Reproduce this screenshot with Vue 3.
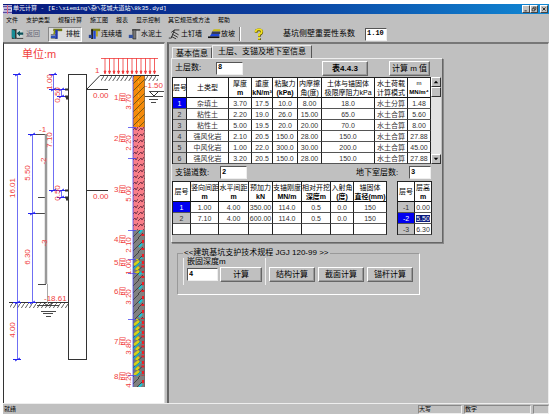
<script setup>
import { ref } from 'vue'

const menus = ['文件', '支护类型', '规程计算', '施工图', '报表', '显示控制', '其它规范或方法', '帮助']
const factor = ref('1.10')
const layerCount = ref('8')
const anchorCount = ref('2')
const basementCount = ref('3')
const depth = ref('4')

const soilHead = [
  ['层号'], ['土类型'], ['厚度', 'm'], ['重度', 'kN/m³'], ['粘聚力', '(kPa)'],
  ['内摩擦', '角(度)'], ['土体与锚固体', '极限摩阻力kPa'], ['水土荷载', '计算模式'], ['m', 'MN/m⁴']
]
const soilCols = ['w14', 'w42', 'w23', 'w21', 'w25', 'w24', 'w53', 'w33', 'w23']
const soils = [
  ['1', '杂填土', '3.70', '17.5', '10.0', '8.00', '18.0', '水土分算', '1.48'],
  ['2', '粘性土', '2.20', '19.0', '26.0', '15.00', '65.0', '水土合算', '5.60'],
  ['3', '粘性土', '5.00', '19.5', '20.0', '20.00', '70.0', '水土合算', '8.00'],
  ['4', '强风化岩', '2.10', '20.5', '150.0', '28.00', '150.0', '水土合算', '27.88'],
  ['5', '中风化岩', '1.00', '22.0', '300.0', '30.00', '200.0', '水土合算', '45.00'],
  ['6', '强风化岩', '3.20', '20.5', '150.0', '28.00', '150.0', '水土合算', '27.88']
]
const anchorHead = [
  ['层号'], ['竖向间距', 'm'], ['水平间距', 'm'], ['预加力', 'kN'], ['支锚刚度', 'MN/m'],
  ['相对开挖', '深度m'], ['入射角', '(度)'], ['锚固体', '直径(mm)']
]
const anchorCols = ['w18', 'w28', 'w30', 'w24', 'w29', 'w29', 'w23', 'w33']
const anchors = [
  ['1', '1.00', '4.00', '350.00', '114.0', '0.5', '0.0', '150'],
  ['2', '7.10', '4.00', '600.00', '114.0', '0.5', '0.0', '150'],
  ['', '', '', '', '', '', '', '']
]
const floors = [['-1', '0.00'], ['-2', '5.50'], ['-3', '6.30']]

const loads = Array.from({ length: 12 }, (_, i) => 105 + i * 4.5)
const strata = [
  { n: '1层', v: '3.70', y: 97, vy: 102 },
  { n: '2层', v: '2.20', y: 138, vy: 143 },
  { n: '3层', v: '5.00', y: 189, vy: 194 },
  { n: '4层', v: '2.10', y: 239, vy: 245 },
  { n: '5层', v: '1.00', y: 262, vy: 267 },
  { n: '6层', v: '3.20', y: 291, vy: 297 },
  { n: '7层', v: '3.80', y: 341, vy: 347 },
  { n: '8层', v: '4.20', y: 376, vy: 380 }
]
const ticks = [127, 158, 230, 259, 273, 319, 375]
const vertical = [
  { t: '16.01', x: 15, y: 188 }, { t: '4.00', x: 15, y: 330 }, { t: '5.50', x: 30, y: 173 },
  { t: '6.30', x: 30, y: 257 }, { t: '1.00', x: 52, y: 82 }, { t: '0.50', x: 60, y: 95 },
  { t: '7.10', x: 52, y: 140 }, { t: '0.50', x: 60, y: 193 }, { t: '-2', x: 46, y: 161 },
  { t: '-3', x: 47, y: 243 }
]
const marks = [[17, 74], [17, 302], [17, 359], [53, 74], [53, 89], [53, 190], [32, 134], [32, 213], [32, 302], [61, 89], [61, 96], [61, 190], [61, 197]]
</script>

<template>
  <div class="app">
    <header class="title">
      <svg class="logo" viewBox="0 0 9 9" aria-hidden="true">
        <rect width="9" height="9" fill="#d8d8e8" /><path d="M0 1.5h4M5 1.5h4M1 4.5h3M5 4.5h3M0 7.5h4M5 7.5h4" stroke="#5a4ca0" stroke-width="1.4" /><path d="M4.5 0v9" stroke="#e06a80" />
      </svg>
      <h1>单元计算 - [E:\xieming\杂\花城大道站\8k35.dyd]</h1>
      <div class="winbtns">
        <button type="button" aria-label="最小化"><svg viewBox="0 0 8 8"><path d="M2 6.5h3" stroke="#000" /></svg></button>
        <button type="button" aria-label="还原"><svg viewBox="0 0 8 8"><path d="M3 3V1.5h3.500v3H5M1.500 3.500h3.500v3H1.500z" fill="none" stroke="#000" stroke-width=".8" /></svg></button>
        <button type="button" class="close" aria-label="关闭"><svg viewBox="0 0 8 8"><path d="M2 2l4 4M6 2L2 6" stroke="#000" /></svg></button>
      </div>
    </header>

    <nav class="menu">
      <a v-for="m in menus" :key="m" href="#">{{ m }}</a>
    </nav>

    <div class="toolbar">
      <button type="button" class="tool dim">
        <svg viewBox="0 0 16 14"><path d="M1 1h6v12H1z" fill="#333" /><path d="M1 1l4 2v10l-4-2z" fill="#178c96" /><path d="M7 2h7v9H7z" fill="#c8d8d8" /><path d="M7 6l4-3v2h4v3h-4v2z" fill="#0a5058" /><path d="M7 12.500h8" stroke="#333" /></svg>返回
      </button>
      <button type="button" class="tool pressed">
        <svg viewBox="0 0 16 14"><path d="M4 2h11" stroke="#6f7810" stroke-width="3" /><path d="M5 2h4L6 7H4z" fill="#8f980c" /><path d="M8 2v11" stroke="#2036b0" stroke-width="3" /><path d="M1 8h6M1 12h7" stroke="#333" /><path d="M1 9h6v3H1z" fill="#2c50b8" /></svg>排桩
      </button>
      <button type="button" class="tool">
        <svg viewBox="0 0 16 14"><path d="M4 2h11" stroke="#787c18" stroke-width="3" /><path d="M5 1v12" stroke="#111" stroke-width="2" /><path d="M8 3v10" stroke="#2348cc" stroke-width="3" /><path d="M1 8h4v4H1z" fill="#25408e" /><path d="M10 3h2v7h-2z" fill="#b6a514" /></svg>连续墙
      </button>
      <button type="button" class="tool">
        <svg viewBox="0 0 16 14"><path d="M5 2h10" stroke="#444" stroke-width="2" /><path d="M6 2h4v11H6z" fill="#777" stroke="#333" /><path d="M1 8h5v4H1z" fill="#3150a0" /><path d="M11 3v10" stroke="#eee" /></svg>水泥土
      </button>
      <button type="button" class="tool">
        <svg viewBox="0 0 16 14"><path d="M1 12h3L8 2h6M6 4l7 4M5 7l7 4M4 10l6 3M8 2l-4 3" fill="none" stroke="#333" stroke-width="1.200" /></svg>土钉墙
      </button>
      <button type="button" class="tool">
        <svg viewBox="0 0 16 14"><path d="M7 1h8v3H5z" fill="#c9bb13" /><path d="M5 4h10v3H4z" fill="#353b5a" /><path d="M4 7h10v3H2z" fill="#1e45d6" /><path d="M0 11h14" stroke="#111" stroke-width="2" /></svg>放坡
      </button>
      <span class="sep"></span>
      <button type="button" class="help" aria-label="帮助">
        <svg viewBox="0 0 12 14"><path d="M3 5V3.500Q3 2 6 2t3 2.500Q9 6 6.500 7.500v2M6.500 11v2" fill="none" stroke="#5c5200" stroke-width="3" /><path d="M2.500 4.500V3.500Q3 1.500 6 1.500t3 2.500Q9 5.500 6 7v2M6 10.500v2" fill="none" stroke="#f4e21c" stroke-width="2" /></svg>
      </button>
      <label class="factor"><span>基坑侧壁重要性系数</span><input v-model="factor" class="field w22" type="text" /></label>
    </div>

    <main class="work">
      <section class="canvas">
        <svg viewBox="4 44 160 358" role="img" aria-label="支护剖面图">
          <defs>
            <pattern id="fill" width="7" height="7" patternUnits="userSpaceOnUse"><rect width="7" height="7" fill="#f58a0a" /><path d="M-1 8L8 -1" stroke="#7b5a10" /><path d="M5 5h1" stroke="#ffe43a" /></pattern>
            <pattern id="clay" width="6" height="6" patternUnits="userSpaceOnUse"><rect width="6" height="6" fill="#f87e88" /><path d="M0 5L3 2l1 2 2-3" fill="none" stroke="#7c3448" /></pattern>
            <pattern id="rock" x="133" width="12" height="14" patternUnits="userSpaceOnUse"><rect width="12" height="14" fill="#808080" /><path d="M0 6L6 0M0 13L9 4M5 14l5-5" stroke="#444" /><path d="M6 9l3-3" stroke="#12c8d8" stroke-width="2" /><path d="M10 2v3M8.500 11h3" stroke="#f01c24" stroke-width="2" /></pattern>
            <pattern id="mid" x="133" width="12" height="10" patternUnits="userSpaceOnUse"><rect width="12" height="10" fill="#777" /><path d="M-1 9L7 2M4 11l6-5" stroke="#174f5c" /><path d="M1 5l5-4M3 10l3-3" stroke="#d8d014" stroke-width="2.500" /><path d="M0 9l8-7" stroke="#12b8c8" stroke-width="1.200" /><path d="M10 1v3M8.500 6.500h3" stroke="#f01c24" stroke-width="2" /></pattern>
            <pattern id="hatch" width="4" height="6" patternUnits="userSpaceOnUse" y="76"><path d="M0 6L4 0" stroke="#333" stroke-width=".8" /></pattern>
          </defs>

          <rect x="101" y="76" width="57" height="5" fill="url(#hatch)" />
          <rect x="10" y="303" width="58" height="5" fill="url(#hatch)" />
          <rect x="133" y="76" width="12" height="51" fill="url(#fill)" />
          <rect x="133" y="127" width="12" height="103" fill="url(#clay)" />
          <rect x="133" y="230" width="12" height="157" fill="url(#rock)" />
          <rect x="133" y="259" width="12" height="14" fill="url(#mid)" />
          <rect x="133" y="319" width="12" height="57" fill="url(#mid)" />
          <path d="M144.500 76V387" stroke="#666" stroke-width=".6" />

          <g fill="none" stroke="#333">
            <rect x="68.500" y="74.500" width="18" height="285" />
            <path d="M87 89.500h21M87 190.500h21M87 89L100 75.500h59M9 302.500h60" />
            <path d="M29 134.500h18M38 197.500h8M28 213.500h18M38 284.500h8M149 91.500h15M145 96.500h18M149 99.500h9M151 102.500h5M37 305.500h22M41 311.500h15M43 313.500h10M46 316.500h5" stroke-width=".9" />
            <path d="M150 92l4 4 4-4M44 303l4 3 4-3" />
            <path d="M65 89.500h4M65 96.500h4M66 98.500h3M65 190.500h4M65 197.500h4M66 199.500h3" stroke-width="2" />
          </g>
          <path d="M46 134V284" stroke="#999" stroke-width="2.500" /><path d="M47.500 284V303" stroke="#aaa" />

          <g stroke="#4a4af0" stroke-width=".8">
            <path d="M17.500 74V359M32.500 134V302M53.500 74V190M61.500 89v8M61.500 190v8M133 75V387" />
            <path v-for="t in ticks" :key="t" :d="`M128 ${t}.500h8`" />
          </g>
          <path v-for="(m, i) in marks" :key="i" :d="`M${m[0] - 4} ${m[1] + 0.5}h8M${m[0] - 2} ${m[1] + 2}l5 -3`" stroke="#2222ee" />

          <g stroke="#f03838" fill="#f03838">
            <path d="M101 58.500h57" stroke-width=".8" />
            <path v-for="x in loads" :key="x" :d="`M${x} 58V73M${x - 1} 71l1 3 1-3z`" stroke-width=".8" />
          </g>

          <g class="red">
            <text class="unit" x="22" y="58">单位:m</text>
            <text x="95" y="73">1</text>
            <text x="93" y="98">0.00</text><text x="93" y="199">0.00</text>
            <text x="163" y="88" text-anchor="end">-1.50</text><text x="39" y="132">-1</text>
            <text x="44" y="301">-18.61</text>
            <text v-for="(v, i) in vertical" :key="i" text-anchor="middle" :transform="`translate(${v.x} ${v.y}) rotate(-90)`">{{ v.t }}</text>
            <g v-for="s in strata" :key="s.n">
              <text x="114" :y="s.y + 3">{{ s.n }}</text>
              <text text-anchor="middle" :transform="`translate(131 ${s.vy}) rotate(-90)`">{{ s.v }}</text>
            </g>
          </g>
        </svg>
      </section>

      <section class="side">
        <div class="tabbox">
          <div class="tabs" role="tablist">
            <button type="button" role="tab" aria-selected="false" class="tab">基本信息</button>
            <button type="button" role="tab" aria-selected="true" class="tab on">土层、支锚及地下室信息</button>
          </div>
          <div class="page">
            <div class="row first">
              <label for="layers">土层数:</label>
              <input id="layers" v-model="layerCount" class="field w26" type="text" />
              <span class="grow"></span>
              <button type="button" class="btn w46">表4.4.3</button>
              <button type="button" class="btn w40">计算 m 值</button>
            </div>
            <div class="gridwrap">
              <table class="grid soil">
                <colgroup><col v-for="(c, i) in soilCols" :key="i" :class="c" /></colgroup>
                <thead><tr><th v-for="(h, i) in soilHead" :key="i"><div v-for="l in h" :key="l">{{ l }}</div></th></tr></thead>
                <tbody>
                  <tr v-for="(r, i) in soils" :key="i"><td v-for="(c, j) in r" :key="j" :class="{ no: j === 0, cur: j === 0 && i === 0 }">{{ c }}</td></tr>
                </tbody>
              </table>
              <div class="scroll">
                <button type="button" aria-label="上移"><svg viewBox="0 0 7 7"><path d="M1.500 4.500h4l-2-2z" /></svg></button>
                <span class="thumb"></span><span class="grow"></span>
                <button type="button" aria-label="下移"><svg viewBox="0 0 7 7"><path d="M1.500 2.500h4l-2 2z" /></svg></button>
              </div>
            </div>
            <div class="row second">
              <label for="anchors">支锚道数:</label>
              <input id="anchors" v-model="anchorCount" class="field w26" type="text" />
              <span class="grow"></span>
              <label for="floors">地下室层数:</label>
              <input id="floors" v-model="basementCount" class="field w22" type="text" />
            </div>
            <div class="gridwrap apart">
              <table class="grid anchor">
                <colgroup><col v-for="(c, i) in anchorCols" :key="i" :class="c" /></colgroup>
                <thead><tr><th v-for="(h, i) in anchorHead" :key="i"><div v-for="l in h" :key="l">{{ l }}</div></th></tr></thead>
                <tbody>
                  <tr v-for="(r, i) in anchors" :key="i"><td v-for="(c, j) in r" :key="j" :class="{ no: j === 0 && c, cur: j === 0 && i === 0 }">{{ c }}</td></tr>
                </tbody>
              </table>
              <table class="grid floor">
                <thead><tr><th>层号</th><th><div>层高</div><div>m</div></th></tr></thead>
                <tbody>
                  <tr v-for="(r, i) in floors" :key="i"><td class="no" :class="{ cur: i === 1 }">{{ r[0] }}</td><td><span :class="{ sel: i === 1 }">{{ r[1] }}</span></td></tr>
                </tbody>
              </table>
            </div>
          </div>
        </div>

        <fieldset class="code">
          <legend>&lt;&lt;建筑基坑支护技术规程 JGJ 120-99 &gt;&gt;</legend>
          <div class="codes">
            <div class="embed">
              <label for="depth">嵌固深度m</label>
              <div class="pair"><input id="depth" v-model="depth" class="field" type="text" /><button type="button" class="btn w42">计算</button></div>
            </div>
            <div class="acts">
              <button type="button" class="btn w46">结构计算</button>
              <button type="button" class="btn w46">截面计算</button>
              <button type="button" class="btn w46">锚杆计算</button>
            </div>
          </div>
        </fieldset>
      </section>
    </main>

    <footer class="status"><span class="grow">就绪</span><span class="cell caps">大写</span><span class="cell num">数字</span><span class="cell end"></span></footer>
  </div>
</template>

<style>
body { background: #fff; }
</style>

<style scoped>
* { box-sizing: border-box; }
.app { min-height: 100vh; padding: 4px 5px 4px 3px; display: flex; flex-direction: column; color: #000; font: 8px/10px "Liberation Sans", "Noto Sans CJK SC", sans-serif; }
button, input { font: inherit; color: inherit; margin: 0; padding: 0; border-radius: 0; }
button { white-space: nowrap; }
svg { display: block; }
.grow { flex: 1; }
.title { height: 10px; display: flex; align-items: center; gap: 1px; color: #fff; background: linear-gradient(90deg, #07187c, #0b3f9f 50%, #1088d4); }
.logo { width: 9px; height: 9px; }
h1 { margin: 0; flex: 1; font: 6px/10px "Liberation Mono", "Noto Sans CJK SC", monospace; white-space: pre; }
.winbtns { display: flex; padding-right: 1px; }
.winbtns button { width: 8px; height: 8px; background: #c0c0c0; border: 1px solid; border-color: #fff #444 #444 #fff; }
.winbtns .close { margin-left: 2px; }
.menu { height: 12px; padding-left: 3px; display: flex; gap: 8px; align-items: center; background: #c0c0c0; font-size: 6px; }
.menu a { color: #000; text-decoration: none; }
.toolbar { height: 16px; padding-left: 6px; display: flex; align-items: center; background: #c0c0c0; font-size: 7px; }
.tool { height: 15px; padding: 0 1px; display: flex; align-items: center; border: 1px solid transparent; background: none; margin-right: 2px; }
.tool svg { width: 13px; height: 12px; flex: none; }
.dim { color: #667; margin-right: 6px; }
.dim svg { margin-right: 2px; }
.pressed { background: #dcdcdc; border-color: #888 #fff #fff #888; margin-right: 4px; }
.pressed svg { margin-right: 3px; }
.sep { width: 2px; height: 14px; background: #777; border-right: 1px solid #fff; margin-right: 12px; }
.help { border: 0; background: none; }
.help svg { width: 12px; height: 13px; }
.factor { margin-left: 18px; display: flex; align-items: center; gap: 10px; font-size: 8px; }
.field { width: 31px; height: 13px; padding: 0 0 2px 1px; border: 1px solid; border-color: #555 #eee #eee #555; background: #fff; font: bold 7px/8px "Liberation Mono", monospace; outline: 0; }
.field.w22 { width: 22px; }
.field.w26 { width: 27px; }
.work { flex: 1; display: grid; grid-template-columns: 162px 1fr; gap: 2px; background: #c0c0c0; }
.canvas { background: #fff; border-top: 2px solid #777; border-left: 1px solid #333; border-right: 1px solid #ddd; }
.canvas svg { width: 100%; height: auto; }
.red { fill: #f04040; font: 8px "Liberation Sans", "Noto Sans CJK SC", sans-serif; }
.unit { font-size: 11px; }
.side { border-top: 2px solid #777; border-left: 2px solid #666; padding: 1px 0 0 2px; display: flex; flex-direction: column; align-items: flex-start; border-right: 1px solid #eee; }
.tabbox { width: 272px; }
.tabs { display: flex; align-items: flex-end; padding-left: 1px; }
.tab { height: 11px; padding: 0 3px; border: 1px solid; border-color: #eee #555 transparent #eee; border-bottom: 0; background: #c0c0c0; line-height: 9px; }
.tab.on { height: 13px; padding: 0 5px 1px; line-height: 11px; }
.page { border: 1px solid; border-color: #eee #666 #666 #eee; padding: 0 0 7px; box-shadow: 1px 1px #888; }
.row { display: flex; align-items: center; padding-left: 3px; }
.first { height: 18px; padding-right: 12px; }
.first label { width: 41px; }
.first .w40 { margin-left: 21px; }
.second { height: 17px; padding-right: 11px; }
.second label { width: 45px; }
.second label + .field.w22 { margin-left: 8px; }
.btn { height: 15px; flex: none; text-align: center; background: #c0c0c0; border: 1px solid; border-color: #fff #666 #666 #fff; box-shadow: inset -1px -1px #999; line-height: 11px; }
.btn.w46 { width: 46px; }
.btn.w40 { width: 41px; }
.btn.w42 { width: 42px; }
.first .w46 { font-weight: bold; }
.gridwrap { display: flex; }
.apart { gap: 10px; align-items: flex-start; }
.grid { table-layout: fixed; border-collapse: separate; border-spacing: 0; background: #fff; border-top: 1px solid #222; border-left: 1px solid #222; font-size: 7px; line-height: 9px; }
.grid th, .grid td { padding: 0; text-align: center; white-space: nowrap; border-right: 1px solid #222; border-bottom: 1px solid #555; }
.grid th { height: 20px; font-weight: normal; border-bottom-color: #111; }
.grid td { height: 11px; color: #333; }
.grid th div + div { font-weight: bold; }
.soil th:nth-child(6) div + div, .soil th:nth-child(7) div + div, .soil th:nth-child(8) div + div { font-weight: normal; }
.soil th:last-child { font-size: 6px; }
.soil { width: 258px; }
.anchor { width: 214px; }
.floor { width: 35px; }
.grid td.no { background: #c0c0c0; }
.grid td.cur { background: #0000f0; color: #fff; }
.sel { background: #0a1a80; color: #fff; }
.w14 { width: 14px; } .w18 { width: 18px; } .w21 { width: 21px; } .w23 { width: 23px; } .w24 { width: 24px; } .w25 { width: 25px; }
.w28 { width: 28px; } .w29 { width: 29px; } .w30 { width: 30px; } .w33 { width: 33px; } .w42 { width: 42px; } .w53 { width: 53px; }
.scroll { width: 10px; display: flex; flex-direction: column; background: #e2e2e2; }
.scroll button, .thumb { height: 10px; background: #c0c0c0; border: 1px solid; border-color: #fff #333 #333 #fff; }
.code { margin: 5px 0 0 6px; width: 243px; height: 47px; padding: 0 0 0 5px; border: 1px solid #999; border-right-color: #fff; border-bottom-color: #fff; min-width: 0; }
.code legend { padding: 0 1px; }
.codes { display: flex; }
.embed { border-left: 1px solid #eee; padding: 0 3px 3px; border-right: 1px solid #eee; }
.embed label { display: block; line-height: 8px; margin-bottom: 1px; }
.pair { display: flex; gap: 2px; align-items: center; }
.acts { display: flex; gap: 3px; padding: 9px 0 0 3px; }
.status { height: 11px; display: flex; align-items: center; gap: 2px; background: #c0c0c0; border-top: 1px solid #eee; font-size: 6px; padding-left: 1px; line-height: 8px; }
.cell { height: 9px; border: 1px solid; border-color: #888 #eee #eee #888; line-height: 7px; }
.caps { width: 44px; } .num { width: 67px; } .end { width: 16px; }
</style>
